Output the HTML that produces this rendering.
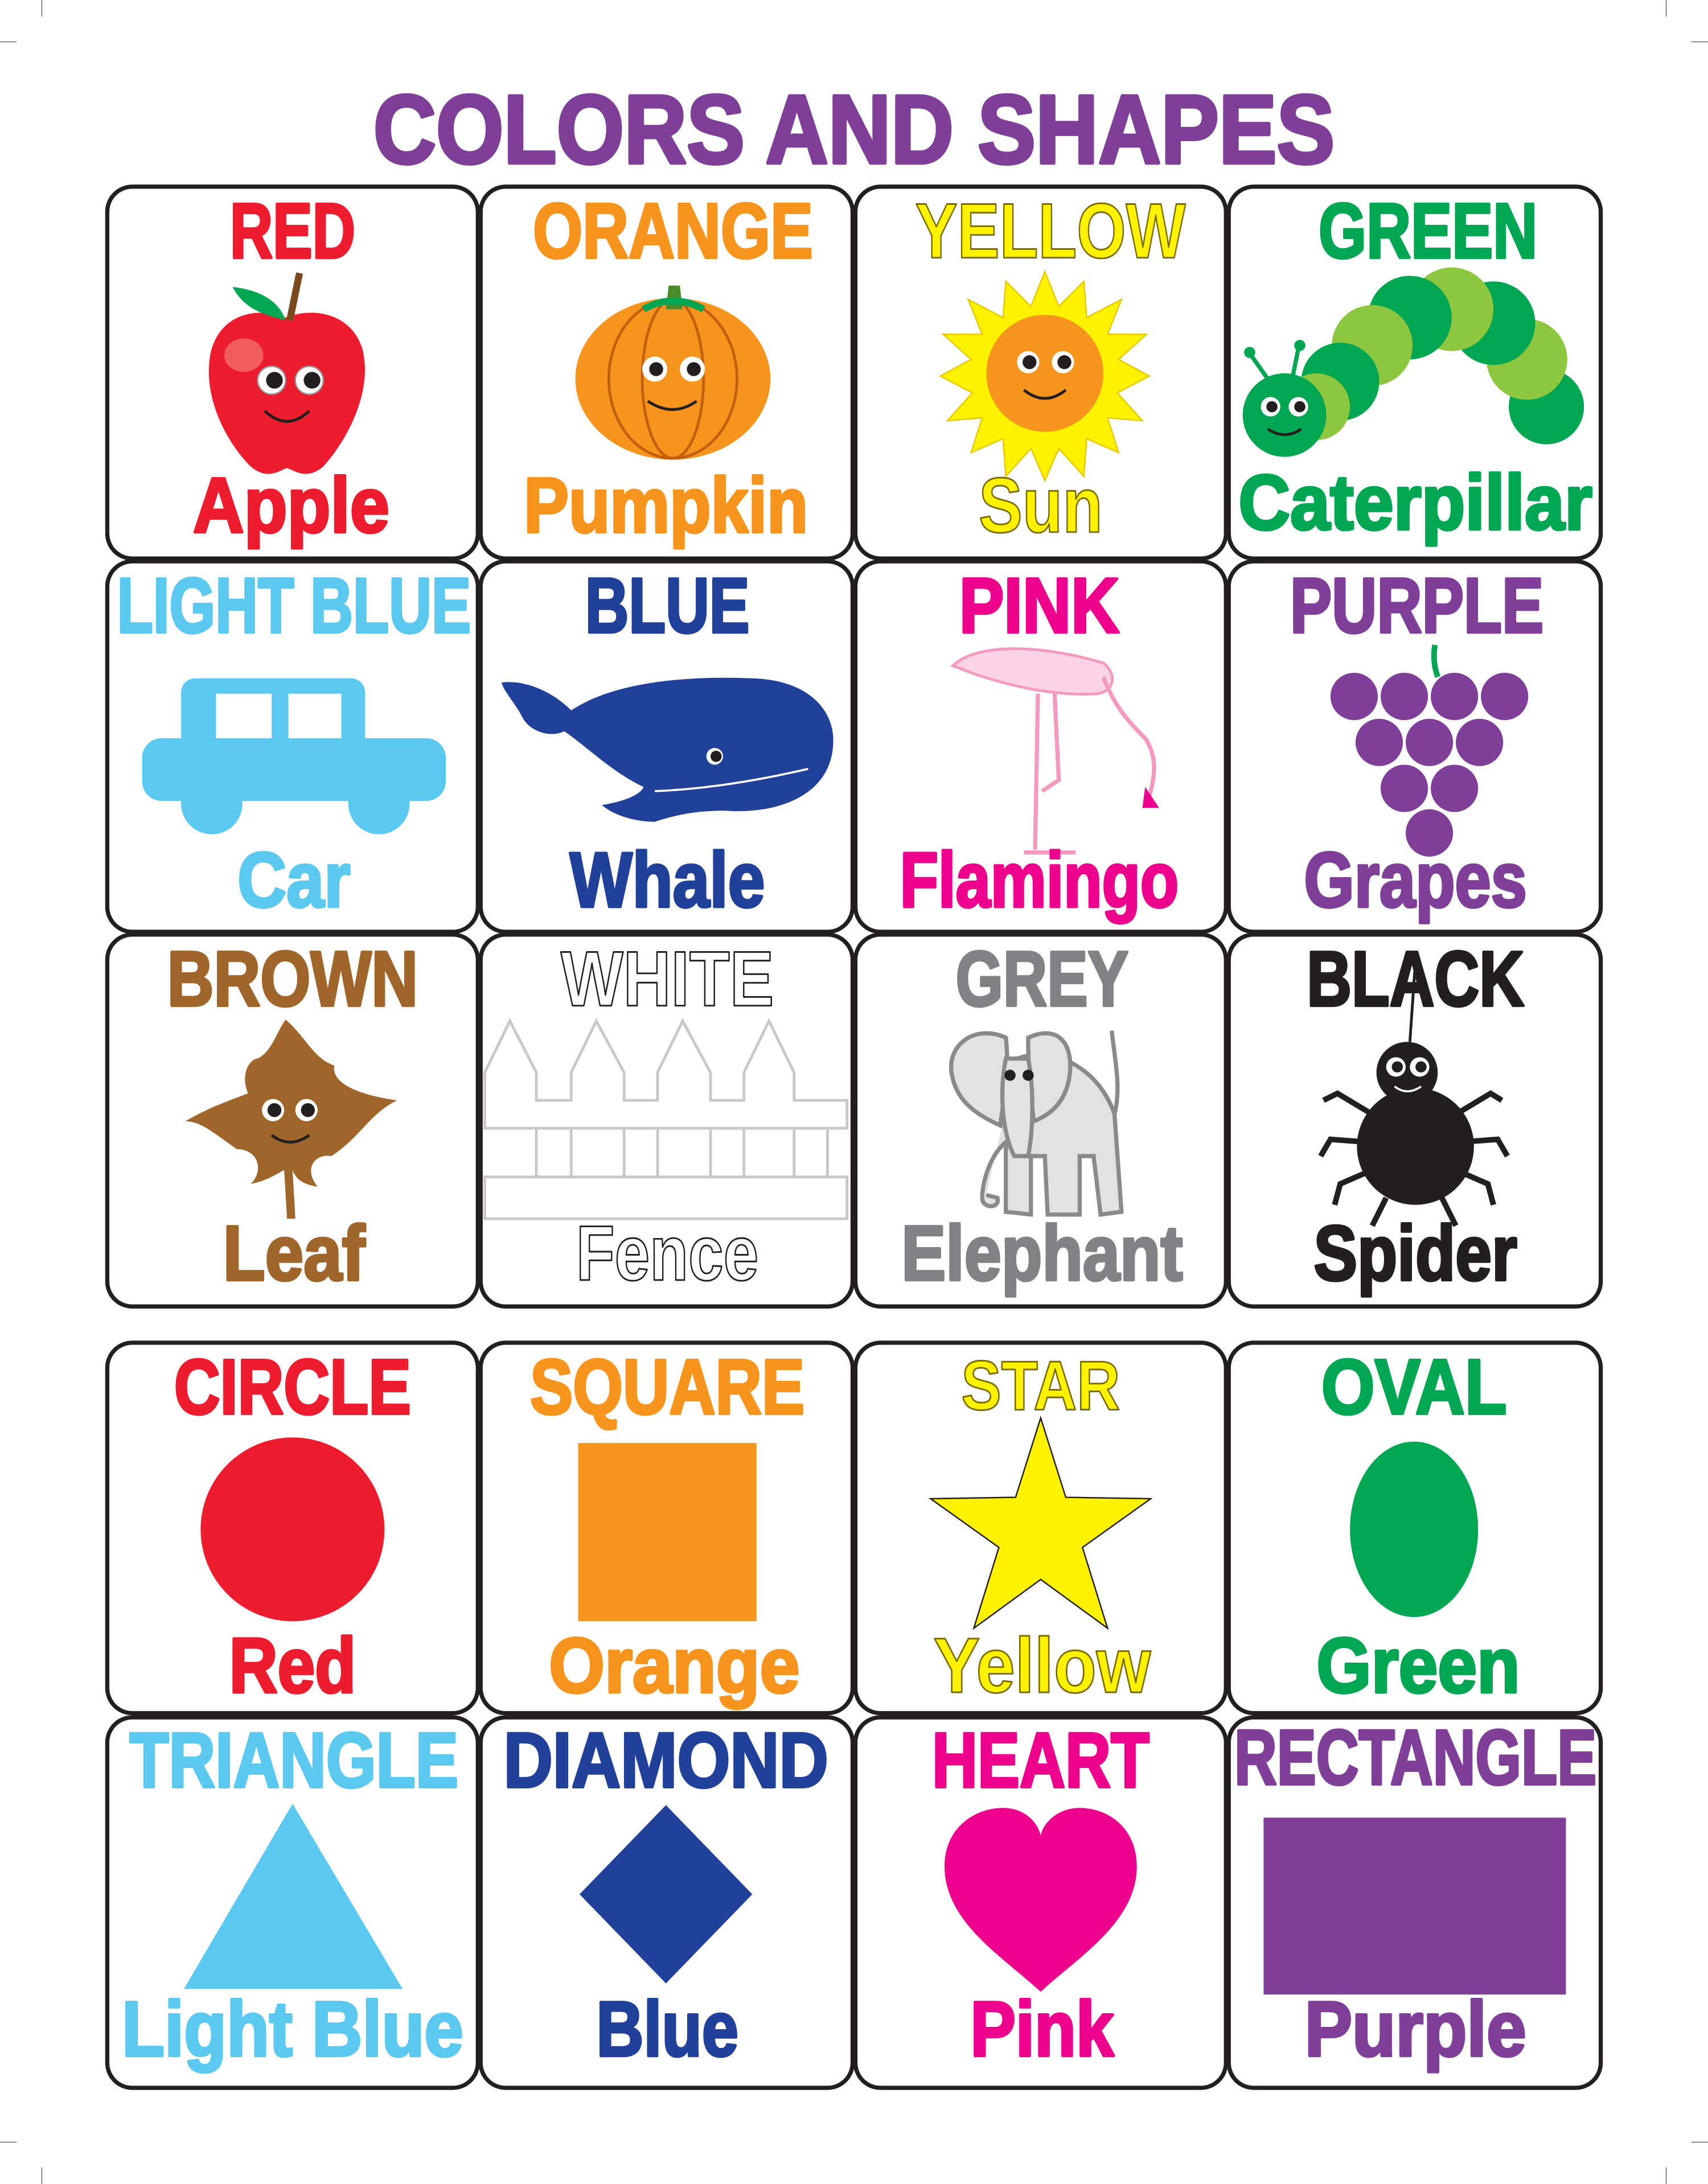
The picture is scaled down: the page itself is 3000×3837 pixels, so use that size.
<!DOCTYPE html>
<html><head><meta charset="utf-8"><style>html,body{margin:0;padding:0;background:#fff}svg{display:block}text{stroke-linejoin:round}</style></head>
<body>
<svg width="3000" height="3837" viewBox="0 0 1226 1568" xmlns="http://www.w3.org/2000/svg">
<rect width="1226" height="1568" fill="#fff"/>
<g stroke="#666" stroke-width="0.6">
<line x1="0" y1="30" x2="12" y2="30"/><line x1="30" y1="0" x2="30" y2="12"/>
<line x1="1214" y1="30" x2="1226" y2="30"/><line x1="1196" y1="0" x2="1196" y2="12"/>
<line x1="0" y1="1538" x2="12" y2="1538"/><line x1="30" y1="1556" x2="30" y2="1568"/>
<line x1="1214" y1="1538" x2="1226" y2="1538"/><line x1="1196" y1="1556" x2="1196" y2="1568"/>
</g>
<text x="268" y="117" font-family="'Liberation Sans',sans-serif" font-weight="bold" font-size="70" textLength="690" lengthAdjust="spacingAndGlyphs" fill="#7f3f98" stroke="#7f3f98" stroke-width="2.5">COLORS AND SHAPES</text>
<g fill="#fff" stroke="#231f20" stroke-width="3">
<rect x="77" y="134" width="266" height="267" rx="18"/><rect x="345" y="134" width="267" height="267" rx="18"/><rect x="614" y="134" width="266" height="267" rx="18"/><rect x="882" y="134" width="267" height="267" rx="18"/>
<rect x="77" y="403" width="266" height="266" rx="18"/><rect x="345" y="403" width="267" height="266" rx="18"/><rect x="614" y="403" width="266" height="266" rx="18"/><rect x="882" y="403" width="267" height="266" rx="18"/>
<rect x="77" y="671" width="266" height="267" rx="18"/><rect x="345" y="671" width="267" height="267" rx="18"/><rect x="614" y="671" width="266" height="267" rx="18"/><rect x="882" y="671" width="267" height="267" rx="18"/>
<rect x="77" y="964" width="266" height="266" rx="18"/><rect x="345" y="964" width="267" height="266" rx="18"/><rect x="614" y="964" width="266" height="266" rx="18"/><rect x="882" y="964" width="267" height="266" rx="18"/>
<rect x="77" y="1233" width="266" height="266" rx="18"/><rect x="345" y="1233" width="267" height="266" rx="18"/><rect x="614" y="1233" width="266" height="266" rx="18"/><rect x="882" y="1233" width="267" height="266" rx="18"/>
</g>

<!-- apple -->
<path d="M205 228 C185 220 160 225 152 250 C144 280 160 315 180 335 C192 345 200 338 206 336 C212 338 220 345 232 335 C250 315 268 280 260 250 C252 225 225 220 205 228Z" fill="#ed1c2e"/>
<ellipse cx="175" cy="255" rx="14" ry="12" fill="#f7a08a" opacity="0.5"/>
<path d="M215 196 L208 230" stroke="#7a4a1e" stroke-width="5"/>
<path d="M167 206 C185 208 200 215 205 230 C190 226 175 222 167 206Z" fill="#00a651"/>
<g><circle cx="195" cy="273" r="10" fill="#fff" stroke="#999"/><circle cx="197" cy="273" r="6" fill="#231f20"/><circle cx="222" cy="273" r="10" fill="#fff" stroke="#999"/><circle cx="224" cy="273" r="6" fill="#231f20"/></g>
<path d="M190 295 Q206 310 222 295" stroke="#231f20" stroke-width="2" fill="none"/>
<!-- pumpkin -->
<ellipse cx="483" cy="272" rx="70" ry="58" fill="#f7941d"/>
<g stroke="#c2600e" stroke-width="2" fill="none"><ellipse cx="483" cy="272" rx="22" ry="57"/><ellipse cx="483" cy="272" rx="46" ry="57"/></g>
<path d="M480 205 L488 205 L490 222 L478 222Z" fill="#4a8a2a"/>
<path d="M462 222 Q483 210 505 222" stroke="#00a651" stroke-width="5" fill="none"/>
<g><circle cx="470" cy="265" r="9" fill="#fff"/><circle cx="471" cy="265" r="5" fill="#231f20"/><circle cx="497" cy="265" r="9" fill="#fff"/><circle cx="498" cy="265" r="5" fill="#231f20"/></g>
<path d="M465 288 Q483 300 500 288" stroke="#231f20" stroke-width="2" fill="none"/>
<!-- sun -->
<polygon fill="#fff200" stroke="#e8c800" stroke-width="1" points="750,195 760,220 778,202 780,228 805,215 795,240 823,240 803,258 825,270 802,282 820,302 795,300 803,325 780,315 778,342 760,322 750,345 740,322 722,342 720,315 697,325 705,300 680,302 698,282 675,270 697,258 677,240 705,240 695,215 720,228 722,202 740,220"/>
<circle cx="750" cy="268" r="42" fill="#f7941d"/>
<g><circle cx="738" cy="260" r="8" fill="#fff"/><circle cx="739" cy="260" r="5" fill="#231f20"/><circle cx="763" cy="260" r="8" fill="#fff"/><circle cx="764" cy="260" r="5" fill="#231f20"/></g>
<path d="M735 280 Q750 292 765 280" stroke="#231f20" stroke-width="2" fill="none"/>
<!-- caterpillar -->
<g>
<circle cx="1110" cy="292" r="27" fill="#00a651"/><circle cx="1096" cy="258" r="29" fill="#8dc63f"/><circle cx="1072" cy="232" r="30" fill="#00a651"/><circle cx="1042" cy="222" r="30" fill="#8dc63f"/><circle cx="1012" cy="228" r="30" fill="#00a651"/><circle cx="985" cy="248" r="29" fill="#8dc63f"/><circle cx="962" cy="274" r="28" fill="#00a651"/><circle cx="945" cy="292" r="24" fill="#8dc63f"/>
<circle cx="922" cy="298" r="30" fill="#00a651"/>
<path d="M910 272 L898 255 M928 270 L932 250" stroke="#00a651" stroke-width="3"/><circle cx="897" cy="253" r="4" fill="#00a651"/><circle cx="933" cy="248" r="4" fill="#00a651"/>
<circle cx="912" cy="292" r="7" fill="#fff"/><circle cx="913" cy="292" r="4" fill="#231f20"/><circle cx="932" cy="292" r="7" fill="#fff"/><circle cx="933" cy="292" r="4" fill="#231f20"/>
<path d="M910 308 Q922 316 934 308" stroke="#231f20" stroke-width="2" fill="none"/>
</g>
<!-- car -->
<g fill="#5bc8f0">
<rect x="130" y="487" width="132" height="55" rx="10"/>
<rect x="102" y="530" width="218" height="45" rx="14"/>
<circle cx="152" cy="577" r="22"/><circle cx="272" cy="577" r="22"/>
</g>
<rect x="155" y="498" width="40" height="32" fill="#fff"/><rect x="207" y="498" width="38" height="32" fill="#fff"/>
<!-- whale -->
<path d="M360 490 C375 488 395 495 410 510 C440 490 490 485 540 487 C580 488 600 510 598 535 C596 570 560 585 520 582 C500 582 485 585 470 590 C455 590 440 585 432 578 C450 575 460 570 462 565 C440 555 420 535 405 525 C395 530 380 525 375 515 C370 505 362 497 360 490Z" fill="#21409a"/>
<circle cx="513" cy="543" r="6" fill="#fff"/><circle cx="514" cy="543" r="4" fill="#231f20"/>
<path d="M470 568 Q520 566 580 552" stroke="#fff" stroke-width="1.5" fill="none"/>
<!-- flamingo -->
<path d="M684 478 C700 462 745 462 792 476 C802 484 800 496 788 498 C760 500 730 494 700 484Z" fill="#fbd3e6" stroke="#f49ac1" stroke-width="2"/>
<g fill="none" stroke="#f49ac1" stroke-width="3">
<path d="M792 486 C800 508 812 520 822 530 C832 545 828 560 825 572"/>
<path d="M745 498 L743 610 M757 498 L760 560 L748 568"/>
<path d="M735 612 L772 612"/>
</g>
<path d="M822 565 L832 580 L820 580Z" fill="#ec008c"/>
<!-- grapes -->
<path d="M1030 463 Q1028 475 1032 486" stroke="#00a651" stroke-width="4" fill="none"/>
<g fill="#7f3f98"><circle cx="972" cy="500" r="17"/><circle cx="1008" cy="500" r="17"/><circle cx="1044" cy="500" r="17"/><circle cx="1080" cy="500" r="17"/><circle cx="990" cy="533" r="17"/><circle cx="1026" cy="533" r="17"/><circle cx="1062" cy="533" r="17"/><circle cx="1008" cy="566" r="17"/><circle cx="1044" cy="566" r="17"/><circle cx="1026" cy="598" r="17"/></g>
<!-- leaf -->
<path d="M205 732 C220 745 225 760 240 765 C238 775 250 785 285 790 C265 800 260 815 238 830 C225 828 218 840 228 852 C215 850 212 845 210 840 L212 875 L206 875 L204 840 C195 845 190 848 180 850 C190 840 185 825 170 825 C155 815 145 805 133 805 C150 795 165 790 178 785 C172 770 180 760 185 760 C195 755 198 742 205 732Z" fill="#a0652a"/>
<g><circle cx="196" cy="797" r="8" fill="#fff"/><circle cx="197" cy="797" r="5" fill="#231f20"/><circle cx="220" cy="797" r="8" fill="#fff"/><circle cx="221" cy="797" r="5" fill="#231f20"/></g>
<path d="M195 815 Q208 825 222 815" stroke="#231f20" stroke-width="2" fill="none"/>
<!-- fence -->
<g fill="#fff" stroke="#c8c8c8" stroke-width="2">
<path d="M348 770 L366 733 L385 770 L385 790 L410 790 L410 770 L428 733 L448 770 L448 790 L472 790 L472 770 L490 733 L510 770 L510 790 L534 790 L534 770 L552 733 L570 770 L570 790 L608 790 L608 810 L348 810Z"/>
<rect x="348" y="845" width="260" height="30"/>
<rect x="385" y="810" width="25" height="35" fill="none"/><rect x="448" y="810" width="24" height="35" fill="none"/><rect x="510" y="810" width="24" height="35" fill="none"/><rect x="570" y="810" width="24" height="35" fill="none"/>
</g>
<!-- elephant -->
<g fill="#e2e2e2" stroke="#8a8a8a" stroke-width="3">
<path d="M730 760 C760 750 790 770 800 800 L805 870 L790 872 L785 830 L775 830 L775 872 L752 872 L750 830 L740 830 L740 872 L722 870 L722 820 C710 830 705 850 705 860 C705 868 718 868 716 860 L708 858"/>
<path d="M722 745 C700 735 680 750 683 770 C686 790 700 800 718 808 C720 790 725 770 722 745Z"/>
<path d="M738 745 C760 735 770 750 768 770 C766 790 755 800 742 805 C740 785 738 770 738 745Z"/>
<path d="M722 760 C718 780 718 810 728 830 L738 830 C742 810 742 780 738 760Z"/>
<path d="M800 800 C805 780 800 760 798 740" fill="none"/>
</g>
<circle cx="725" cy="772" r="4" fill="#231f20"/><circle cx="738" cy="772" r="4" fill="#231f20"/>
<!-- spider -->
<line x1="1016" y1="690" x2="1012" y2="748" stroke="#231f20" stroke-width="2"/>
<g stroke="#231f20" stroke-width="4" fill="none">
<path d="M985 800 L960 785 L950 790 M982 820 L955 818 L948 830 M985 840 L962 850 L958 865 M995 860 L985 880 M1045 800 L1070 785 L1078 790 M1048 820 L1075 818 L1082 830 M1045 840 L1068 850 L1072 865 M1035 860 L1045 880"/>
</g>
<circle cx="1016" cy="823" r="42" fill="#231f20"/>
<circle cx="1010" cy="770" r="22" fill="#231f20"/>
<g><circle cx="1002" cy="766" r="7" fill="#fff"/><circle cx="1003" cy="766" r="4" fill="#231f20"/><circle cx="1019" cy="766" r="7" fill="#fff"/><circle cx="1020" cy="766" r="4" fill="#231f20"/></g>
<path d="M1001 780 Q1010 787 1020 780" stroke="#fff" stroke-width="1.5" fill="none"/>

<!-- shapes -->
<circle cx="210" cy="1098" r="66" fill="#ed1c2e"/>
<rect x="415" y="1036" width="128" height="128" fill="#f7941d"/>
<polygon points="747,1018 765,1075 826,1076 777,1111 795,1169 747,1134 699,1169 717,1111 668,1076 729,1075" fill="#fff200" stroke="#231f20" stroke-width="1"/>
<ellipse cx="1015" cy="1098" rx="46" ry="63" fill="#00a651"/>
<polygon points="210,1295 289,1428 132,1428" fill="#5bc8f0"/>
<polygon points="478,1296 540,1360 478,1424 416,1360" fill="#21409a"/>
<path d="M747 1430 C720 1405 678 1380 678 1340 C678 1312 700 1298 720 1298 C735 1298 745 1308 747 1318 C749 1308 760 1298 775 1298 C795 1298 816 1312 816 1340 C816 1380 774 1405 747 1430Z" fill="#ec008c"/>
<rect x="907" y="1305" width="217" height="127" fill="#7f3f98"/>

<!-- labels -->
<g font-family="'Liberation Sans',sans-serif" font-weight="bold" font-size="56" text-anchor="middle" stroke-width="2">
<text x="210" y="185" textLength="90" lengthAdjust="spacingAndGlyphs" fill="#ed1c2e" stroke="#ed1c2e">RED</text>
<text x="483" y="185" textLength="201" lengthAdjust="spacingAndGlyphs" fill="#f7941d" stroke="#f7941d">ORANGE</text>
<text x="754" y="185" textLength="194" lengthAdjust="spacingAndGlyphs" fill="#fff200" stroke="#7a6a00" stroke-width="1.2">YELLOW</text>
<text x="1025" y="185" textLength="157" lengthAdjust="spacingAndGlyphs" fill="#00a651" stroke="#00a651">GREEN</text>
<text x="211" y="454" textLength="254" lengthAdjust="spacingAndGlyphs" fill="#5bc8f0" stroke="#5bc8f0">LIGHT BLUE</text>
<text x="479" y="454" textLength="118" lengthAdjust="spacingAndGlyphs" fill="#21409a" stroke="#21409a">BLUE</text>
<text x="746" y="454" textLength="115" lengthAdjust="spacingAndGlyphs" fill="#ec008c" stroke="#ec008c">PINK</text>
<text x="1017" y="454" textLength="182" lengthAdjust="spacingAndGlyphs" fill="#7f3f98" stroke="#7f3f98">PURPLE</text>
<text x="210" y="722" textLength="180" lengthAdjust="spacingAndGlyphs" fill="#a0652a" stroke="#a0652a">BROWN</text>
<text x="479" y="722" textLength="153" lengthAdjust="spacingAndGlyphs" fill="#fff" stroke="#231f20" stroke-width="1.2">WHITE</text>
<text x="748" y="722" textLength="124" lengthAdjust="spacingAndGlyphs" fill="#808285" stroke="#808285">GREY</text>
<text x="1016" y="722" textLength="156" lengthAdjust="spacingAndGlyphs" fill="#231f20" stroke="#231f20">BLACK</text>
<text x="210" y="1015" textLength="170" lengthAdjust="spacingAndGlyphs" fill="#ed1c2e" stroke="#ed1c2e">CIRCLE</text>
<text x="479" y="1015" textLength="197" lengthAdjust="spacingAndGlyphs" fill="#f7941d" stroke="#f7941d">SQUARE</text>
<text x="747" y="1012" font-size="50" textLength="114" lengthAdjust="spacingAndGlyphs" fill="#fff200" stroke="#7a6a00" stroke-width="1.2">STAR</text>
<text x="1015" y="1015" textLength="133" lengthAdjust="spacingAndGlyphs" fill="#00a651" stroke="#00a651">OVAL</text>
<text x="211" y="1283" textLength="236" lengthAdjust="spacingAndGlyphs" fill="#5bc8f0" stroke="#5bc8f0">TRIANGLE</text>
<text x="478" y="1283" textLength="233" lengthAdjust="spacingAndGlyphs" fill="#21409a" stroke="#21409a">DIAMOND</text>
<text x="747" y="1283" textLength="156" lengthAdjust="spacingAndGlyphs" fill="#ec008c" stroke="#ec008c">HEART</text>
<text x="1016" y="1281" textLength="260" lengthAdjust="spacingAndGlyphs" fill="#7f3f98" stroke="#7f3f98">RECTANGLE</text>

<text x="209" y="382" textLength="141" lengthAdjust="spacingAndGlyphs" fill="#ed1c2e" stroke="#ed1c2e">Apple</text>
<text x="478" y="382" textLength="204" lengthAdjust="spacingAndGlyphs" fill="#f7941d" stroke="#f7941d">Pumpkin</text>
<text x="747" y="382" textLength="89" lengthAdjust="spacingAndGlyphs" fill="#fff200" stroke="#7a6a00" stroke-width="1.2">Sun</text>
<text x="1016" y="380" textLength="254" lengthAdjust="spacingAndGlyphs" fill="#00a651" stroke="#00a651">Caterpillar</text>
<text x="211" y="651" textLength="81" lengthAdjust="spacingAndGlyphs" fill="#5bc8f0" stroke="#5bc8f0">Car</text>
<text x="479" y="651" textLength="140" lengthAdjust="spacingAndGlyphs" fill="#21409a" stroke="#21409a">Whale</text>
<text x="746" y="651" textLength="200" lengthAdjust="spacingAndGlyphs" fill="#ec008c" stroke="#ec008c">Flamingo</text>
<text x="1016" y="651" textLength="160" lengthAdjust="spacingAndGlyphs" fill="#7f3f98" stroke="#7f3f98">Grapes</text>
<text x="211" y="919" textLength="102" lengthAdjust="spacingAndGlyphs" fill="#a0652a" stroke="#a0652a">Leaf</text>
<text x="479" y="919" textLength="131" lengthAdjust="spacingAndGlyphs" fill="#fff" stroke="#231f20" stroke-width="1.2">Fence</text>
<text x="748" y="919" textLength="202" lengthAdjust="spacingAndGlyphs" fill="#808285" stroke="#808285">Elephant</text>
<text x="1016" y="919" textLength="146" lengthAdjust="spacingAndGlyphs" fill="#231f20" stroke="#231f20">Spider</text>
<text x="210" y="1215" textLength="91" lengthAdjust="spacingAndGlyphs" fill="#ed1c2e" stroke="#ed1c2e">Red</text>
<text x="484" y="1215" textLength="180" lengthAdjust="spacingAndGlyphs" fill="#f7941d" stroke="#f7941d">Orange</text>
<text x="748" y="1215" textLength="156" lengthAdjust="spacingAndGlyphs" fill="#fff200" stroke="#7a6a00" stroke-width="1.2">Yellow</text>
<text x="1018" y="1215" textLength="146" lengthAdjust="spacingAndGlyphs" fill="#00a651" stroke="#00a651">Green</text>
<text x="210" y="1476" textLength="245" lengthAdjust="spacingAndGlyphs" fill="#5bc8f0" stroke="#5bc8f0">Light Blue</text>
<text x="479" y="1476" textLength="102" lengthAdjust="spacingAndGlyphs" fill="#21409a" stroke="#21409a">Blue</text>
<text x="748" y="1476" textLength="103" lengthAdjust="spacingAndGlyphs" fill="#ec008c" stroke="#ec008c">Pink</text>
<text x="1016" y="1476" textLength="159" lengthAdjust="spacingAndGlyphs" fill="#7f3f98" stroke="#7f3f98">Purple</text>
</g>
</svg>
</body></html>
